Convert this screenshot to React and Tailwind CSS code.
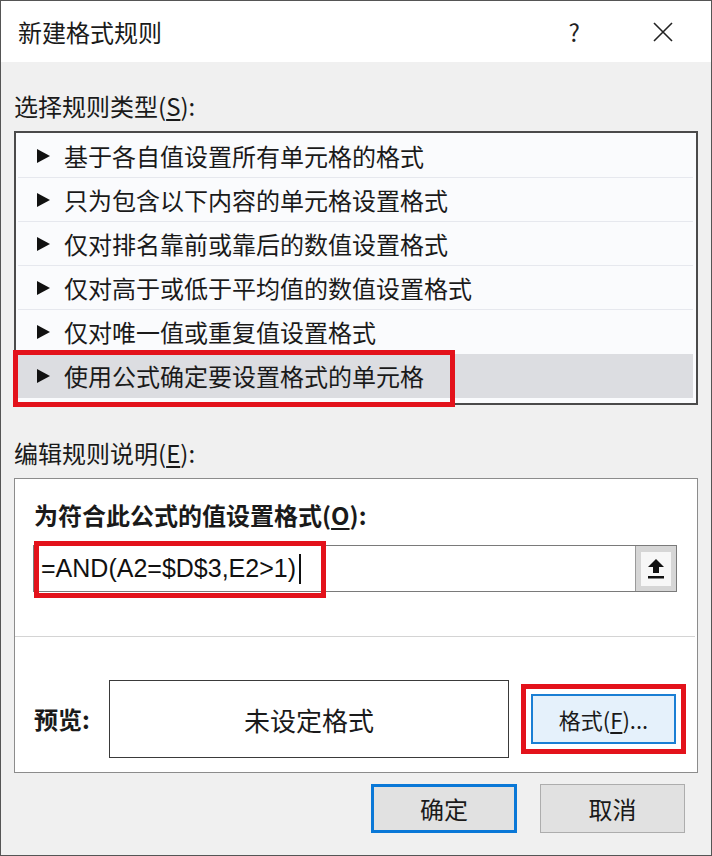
import React from "react";

const cjk = { fontFamily: '"Noto Sans CJK SC", "Noto Sans", sans-serif' };

const ruleTypes = [
  "基于各自值设置所有单元格的格式",
  "只为包含以下内容的单元格设置格式",
  "仅对排名靠前或靠后的数值设置格式",
  "仅对高于或低于平均值的数值设置格式",
  "仅对唯一值或重复值设置格式",
  "使用公式确定要设置格式的单元格",
];

const Arrow = () => (
  <svg width="15" height="16" viewBox="0 0 15 16" className="shrink-0">
    <path d="M1 1 L14 8 L1 15 Z" fill="#111" />
  </svg>
);

const UploadIcon = () => (
  <svg width="20" height="22" viewBox="0 0 20 22">
    <path d="M10 1 L18 9 L13 9 L13 15 L7 15 L7 9 L2 9 Z" fill="#111" />
    <rect x="2" y="18" width="16" height="2.5" fill="#111" />
  </svg>
);

const App = () => {
  const selected = 5;

  return (
    <div
      className="w-[712px] h-[856px] bg-[#f0f0f0] border border-[#555] flex flex-col text-[#1a1a1a] overflow-hidden"
      style={cjk}
    >
      {/* title bar */}
      <div className="h-[61px] bg-white flex items-center pl-[17px] pr-[37px] shrink-0">
        <div className="text-[24px] leading-[30px]">新建格式规则</div>
        <div className="ml-auto flex items-center gap-[72px]">
          <span className="text-[24px] leading-none text-[#222]">?</span>
          <svg width="22" height="22" viewBox="0 0 22 22">
            <path d="M2 2 L20 20 M20 2 L2 20" stroke="#222" strokeWidth="1.6" />
          </svg>
        </div>
      </div>

      <div className="flex-1 px-[13px] flex flex-col">
        <div className="pt-[29px] text-[24px] leading-[30px]">
          选择规则类型(<span className="underline underline-offset-[3px]">S</span>):
        </div>

        {/* rule list */}
        <div className="relative mt-[10px] border-2 border-[#4a4a4a] bg-[#fafbfd] pt-[1px] pb-[5px] pl-[2px] pr-[3px]">
          {ruleTypes.map((t, i) => (
            <div
              key={t}
              className={`h-[44px] flex items-center pl-[18px] gap-[13px] text-[24px] leading-[30px] ${
                i === selected ? "bg-[#dcdde1]" : "border-b border-[#e6e8ee]"
              } ${i === selected - 1 ? "border-b-0" : ""}`}
            >
              <Arrow />
              <span>{t}</span>
            </div>
          ))}
          <div className="absolute left-[-3px] top-[217px] w-[442px] h-[57px] border-[5px] border-[#e3121b] pointer-events-none" />
        </div>

        <div className="mt-[33px] text-[24px] leading-[30px]">
          编辑规则说明(<span className="underline underline-offset-[3px]">E</span>):
        </div>

        {/* description group */}
        <div className="mt-[10px] h-[295px] border border-[#8c8c8c] bg-white flex flex-col">
          <div className="pt-[21px] pl-[19px] text-[24px] leading-[30px] font-bold">
            为符合此公式的值设置格式(<span className="underline underline-offset-[3px]">O</span>):
          </div>

          <div className="relative mt-[15px] ml-[18px] mr-[20px] h-[47px] border border-[#7a7a7a] flex">
            <div className="flex-1 flex items-center pl-[7px]">
              <span
                className="text-[25px] leading-none text-[#111]"
                style={{ fontFamily: '"Liberation Sans", Arial, sans-serif' }}
              >
                =AND(A2=$D$3,E2&gt;1)
              </span>
              <span className="ml-[3px] w-[2px] h-[30px] bg-[#111]" />
            </div>
            <div className="w-[41px] border-l border-[#9a9a9a] bg-[#d6d6d6] flex items-center justify-center">
              <div className="w-[30px] h-[34px] bg-[#f7f7f7] flex items-center justify-center">
                <UploadIcon />
              </div>
            </div>
            <div className="absolute left-[0px] top-[-5px] w-[292px] h-[57px] border-[5px] border-[#e3121b] pointer-events-none" />
          </div>

          <div className="mt-[44px] mr-[2px] h-px bg-[#d4d4d4]" />

          <div className="mt-[43px] flex items-center pl-[19px]">
            <div className="w-[75px] text-[24px] leading-[30px] font-bold">预览:</div>
            <div className="w-[400px] h-[78px] border border-[#3a3a3a] flex items-center justify-center text-[26px]">
              未设定格式
            </div>
            <div className="ml-[12px] p-[5px] border-[5px] border-[#e3121b] w-[165px] h-[70px] flex">
              <button className="flex-1 bg-[#e5f1fb] border-2 border-[#1a7fd4] text-[22px] flex items-center justify-center">
                格式(<span className="underline underline-offset-[3px]">F</span>)...
              </button>
            </div>
          </div>
        </div>

        {/* footer */}
        <div className="mt-[11px] flex justify-end gap-[23px] pr-[13px]">
          <button className="w-[146px] h-[49px] bg-[#e1e1e1] border-[3px] border-[#0a78d7] text-[24px]">
            确定
          </button>
          <button className="w-[145px] h-[49px] bg-[#e1e1e1] border border-[#adadad] text-[24px]">
            取消
          </button>
        </div>
      </div>
    </div>
  );
};

export default App;
